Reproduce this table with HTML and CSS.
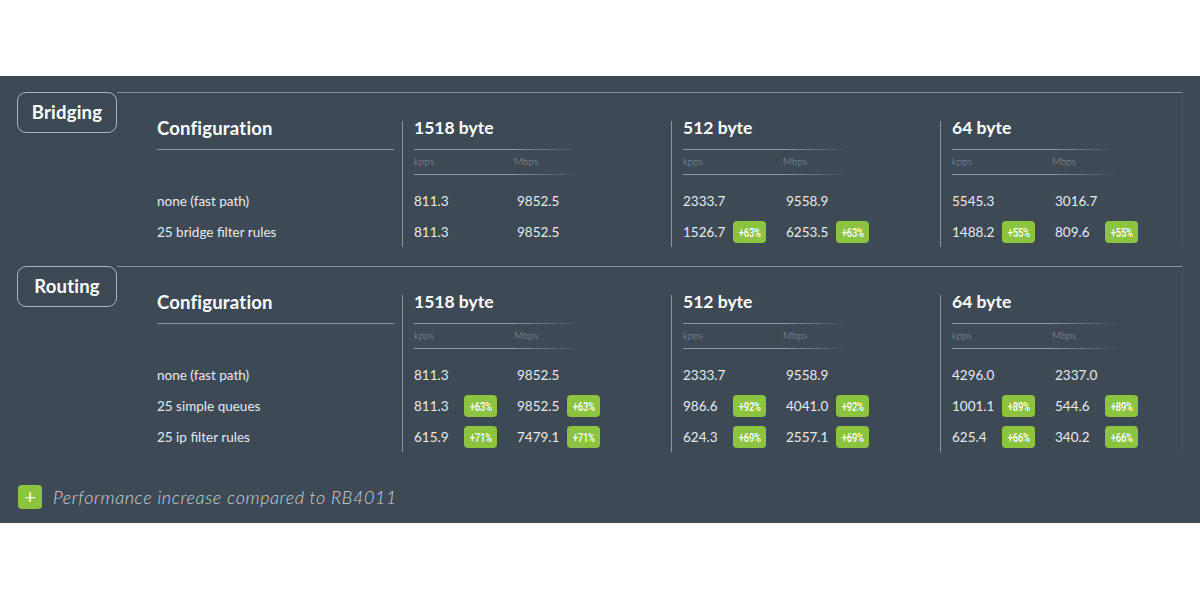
FILE: index.html
```html
<!DOCTYPE html>
<html lang="en">
<head>
<meta charset="utf-8">
<title>Performance tests</title>
<link rel="stylesheet" href="styles.css">
</head>
<body>
<main class="band">
  <section class="sec">
    <div class="tag">Bridging</div>
    <div class="panel">
      <div class="grid">
        <div class="col cfg">
          <div class="h">Configuration</div>
          <div class="sub"></div>
          <div class="rows">
            <div class="r">none (fast path)</div>
            <div class="r">25 bridge filter rules</div>
          </div>
        </div>
        <div class="col grp">
          <div class="h">1518 byte</div>
          <div class="sub"><span>kpps</span><span>Mbps</span></div>
          <div class="rows">
            <div class="r"><span>811.3</span><span></span><span>9852.5</span><span></span></div>
            <div class="r"><span>811.3</span><span></span><span>9852.5</span><span></span></div>
          </div>
        </div>
        <div class="col grp">
          <div class="h">512 byte</div>
          <div class="sub"><span>kpps</span><span>Mbps</span></div>
          <div class="rows">
            <div class="r"><span>2333.7</span><span></span><span>9558.9</span><span></span></div>
            <div class="r"><span>1526.7</span><span class="b"><i>+63%</i></span><span>6253.5</span><span class="b"><i>+63%</i></span></div>
          </div>
        </div>
        <div class="col grp">
          <div class="h">64 byte</div>
          <div class="sub"><span>kpps</span><span>Mbps</span></div>
          <div class="rows">
            <div class="r"><span>5545.3</span><span></span><span>3016.7</span><span></span></div>
            <div class="r"><span>1488.2</span><span class="b"><i>+55%</i></span><span>809.6</span><span class="b"><i>+55%</i></span></div>
          </div>
        </div>
      </div>
    </div>
  </section>

  <section class="sec">
    <div class="tag">Routing</div>
    <div class="panel">
      <div class="grid">
        <div class="col cfg">
          <div class="h">Configuration</div>
          <div class="sub"></div>
          <div class="rows">
            <div class="r">none (fast path)</div>
            <div class="r">25 simple queues</div>
            <div class="r">25 ip filter rules</div>
          </div>
        </div>
        <div class="col grp">
          <div class="h">1518 byte</div>
          <div class="sub"><span>kpps</span><span>Mbps</span></div>
          <div class="rows">
            <div class="r"><span>811.3</span><span></span><span>9852.5</span><span></span></div>
            <div class="r"><span>811.3</span><span class="b"><i>+63%</i></span><span>9852.5</span><span class="b"><i>+63%</i></span></div>
            <div class="r"><span>615.9</span><span class="b"><i>+71%</i></span><span>7479.1</span><span class="b"><i>+71%</i></span></div>
          </div>
        </div>
        <div class="col grp">
          <div class="h">512 byte</div>
          <div class="sub"><span>kpps</span><span>Mbps</span></div>
          <div class="rows">
            <div class="r"><span>2333.7</span><span></span><span>9558.9</span><span></span></div>
            <div class="r"><span>986.6</span><span class="b"><i>+92%</i></span><span>4041.0</span><span class="b"><i>+92%</i></span></div>
            <div class="r"><span>624.3</span><span class="b"><i>+69%</i></span><span>2557.1</span><span class="b"><i>+69%</i></span></div>
          </div>
        </div>
        <div class="col grp">
          <div class="h">64 byte</div>
          <div class="sub"><span>kpps</span><span>Mbps</span></div>
          <div class="rows">
            <div class="r"><span>4296.0</span><span></span><span>2337.0</span><span></span></div>
            <div class="r"><span>1001.1</span><span class="b"><i>+89%</i></span><span>544.6</span><span class="b"><i>+89%</i></span></div>
            <div class="r"><span>625.4</span><span class="b"><i>+66%</i></span><span>340.2</span><span class="b"><i>+66%</i></span></div>
          </div>
        </div>
      </div>
    </div>
  </section>

  <footer class="legend">
    <span class="plus">+</span>
    <span class="note">Performance increase compared to RB4011</span>
  </footer>
</main>
</body>
</html>
```

FILE: styles.css
```css
* { box-sizing: border-box; }

html, body {
  margin: 0;
  padding: 0;
  background: #ffffff;
}

body {
  font-family: Lato, "Open Sans", sans-serif;
  color: #e8ecef;
}

.band {
  margin-top: 76px;
  height: 447px;
  background: #3d4a56;
  padding-top: 16px;
  display: flex;
  flex-direction: column;
}

.sec {
  display: flex;
  margin-bottom: 19px;
}

.tag {
  margin-left: 17px;
  width: 100px;
  height: 41px;
  flex: none;
  border: 1.5px solid #aab4bd;
  border-radius: 9px;
  display: flex;
  align-items: center;
  justify-content: center;
  font-weight: 700;
  font-size: 18.5px;
  letter-spacing: 0.2px;
  color: #ffffff;
  padding-bottom: 2px;
}

.panel {
  flex: 1;
  margin-right: 17px;
  border-top: 1px solid #8593a0;
  border-right: 1px solid rgba(255, 255, 255, 0.05);
  padding-left: 40px;
  padding-top: 24px;
}

.grid {
  display: grid;
  grid-template-columns: 245px 269px 269px 1fr;
}

.col { display: flex; flex-direction: column; }

.h {
  height: 33px;
  line-height: 22px;
  font-size: 17px;
  font-weight: 700;
  color: #ffffff;
  border-bottom: 1px solid #8996a2;
}

.cfg .h {
  margin-right: 8px;
  font-size: 18.5px;
  letter-spacing: 0.2px;
}

.sub {
  height: 25px;
  padding-top: 5px;
  font-size: 10px;
  line-height: 12px;
  font-weight: 300;
  color: #8d99a4;
  display: grid;
  grid-template-columns: 100px auto;
}

.grp .h,
.grp .sub {
  width: 165px;
  border-bottom: 1px solid #8996a2;
  border-image: linear-gradient(to right, #8c99a5 60%, rgba(140, 153, 165, 0)) 1;
}

.grp {
  border-left: 1px solid #8a96a1;
  padding-left: 11px;
  margin-top: 4px;
}

.grp .h { height: 29px; line-height: 14px; font-size: 17.5px; }

.rows { padding-top: 10px; }

.r {
  height: 31px;
  display: flex;
  align-items: center;
  font-size: 13.5px;
  color: #e6eaed;
}

.grp .r {
  display: grid;
  grid-template-columns: 50px 53px 50px 40px;
  align-items: center;
}

.b {
  width: 33px;
  height: 22px;
  background: #8cc33f;
  border-radius: 4px;
  display: flex;
  align-items: center;
  justify-content: center;
  overflow: hidden;
}

.b i {
  font-style: normal;
  font-family: Roboto, sans-serif;
  font-size: 13.5px;
  font-weight: 500;
  color: #ffffff;
  display: inline-block;
  transform: scaleX(0.7);
  letter-spacing: -0.3px;
}

.legend {
  margin-top: 14px;
  margin-left: 18px;
  display: flex;
  align-items: center;
  gap: 11px;
}

.plus {
  width: 24px;
  height: 24px;
  border-radius: 4px;
  background: #8cc33f;
  color: #ffffff;
  font-size: 20px;
  font-weight: 400;
  line-height: 23px;
  text-align: center;
}

.note {
  font-style: italic;
  font-weight: 300;
  font-size: 18px;
  color: #c9d0d6;
  letter-spacing: 0.6px;
}
```
